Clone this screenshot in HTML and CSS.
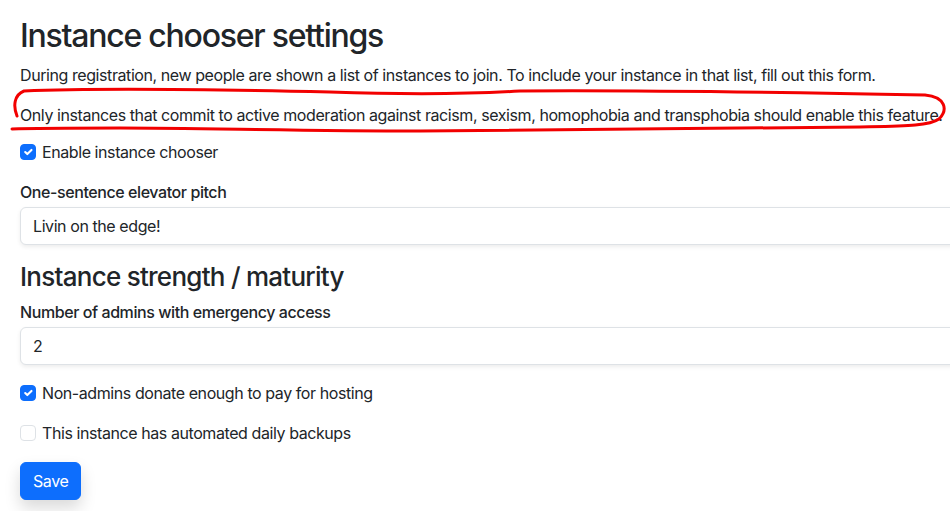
FILE: index.html
```html
<!DOCTYPE html>
<html lang="en">
<head>
    <meta charset="UTF-8">
    <meta name="viewport" content="width=device-width, initial-scale=1.0">
    <title>Instance chooser settings</title>
    <link rel="stylesheet" href="styles.css">
</head>
<body>
<main class="page">
    <h2 class="title">Instance chooser settings</h2>
    <p class="text">During registration, new people are shown a list of instances to join. To include your instance in that list, fill out this form.</p>
    <p class="text notice">Only instances that commit to active moderation against racism, sexism, homophobia and transphobia should enable this feature.</p>

    <div class="check-row">
        <input type="checkbox" id="enabled" class="check" checked>
        <label for="enabled">Enable instance chooser</label>
    </div>

    <div class="field">
        <label for="pitch" class="field-label">One-sentence elevator pitch</label>
        <input type="text" id="pitch" class="text-input" value="Livin on the edge!">
    </div>

    <h3 class="subtitle">Instance strength / maturity</h3>

    <div class="field">
        <label for="admins" class="field-label">Number of admins with emergency access</label>
        <input type="text" id="admins" class="text-input" value="2">
    </div>

    <div class="check-row">
        <input type="checkbox" id="donate" class="check" checked>
        <label for="donate">Non-admins donate enough to pay for hosting</label>
    </div>

    <div class="check-row">
        <input type="checkbox" id="backups" class="check">
        <label for="backups">This instance has automated daily backups</label>
    </div>

    <button type="submit" class="btn-save">Save</button>
</main>

<!-- hand-drawn highlight around the notice -->
<svg class="annotation" width="950" height="511" viewBox="0 0 950 511">
    <path d="M17 116 C13 106, 14 95, 24 91 C90 88, 200 89, 330 92 C420 95, 470 94, 520 91 C650 90, 820 93, 925 95 C946 97, 948 110, 939 119 C929 126, 905 126, 860 127 C700 128, 560 129, 420 131 C300 131, 200 128, 120 128 C70 128, 35 128, 12 129"
          fill="none" stroke="#f20000" stroke-width="3" stroke-linecap="round"/>
</svg>
</body>
</html>
```

FILE: styles.css
```css
body {
    margin: 0;
    font-family: Inter, "Noto Sans", sans-serif;
    font-size: 16px;
    line-height: 1.5;
    letter-spacing: -0.42px;
    color: #212529;
    background: #fff;
    overflow: hidden;
    width: 950px;
    height: 511px;
}
.page {
    width: 1100px;
    padding: 17px 0 0 20px;
}
.title {
    font-size: 32px;
    font-weight: 500;
    line-height: 1.2;
    letter-spacing: -1.24px;
    margin: 0 0 8px;
}
.subtitle {
    font-size: 26px;
    font-weight: 500;
    line-height: 1.2;
    letter-spacing: -0.74px;
    margin: 1px 0 7px;
}
.text {
    margin: 0 0 16px;
}
.notice {
    margin-bottom: 13px;
}
.check-row {
    display: flex;
    align-items: flex-start;
    gap: 6px;
    margin-bottom: 16px;
}
.check {
    appearance: none;
    width: 16px;
    height: 16px;
    margin: 4px 0 0;
    border: 1px solid #dee2e6;
    border-radius: 4px;
    background: #fff;
    flex-shrink: 0;
}
.check:checked {
    background-color: #0d6efd;
    border-color: #0d6efd;
    background-image: url("data:image/svg+xml,%3csvg xmlns='http://www.w3.org/2000/svg' viewBox='0 0 20 20'%3e%3cpath fill='none' stroke='%23fff' stroke-linecap='round' stroke-linejoin='round' stroke-width='3' d='m6 10 3 3 6-6'/%3e%3c/svg%3e");
    background-size: 100% 100%;
}
.field {
    margin-bottom: 16px;
}
.field-label {
    display: block;
    font-weight: 500;
    margin-bottom: 3px;
}
.text-input {
    display: block;
    width: 100%;
    box-sizing: border-box;
    padding: 6px 12px;
    font: inherit;
    letter-spacing: inherit;
    color: #212529;
    border: 1px solid #dee2e6;
    border-radius: 6px;
    box-shadow: 0 2px 4px rgba(0, 0, 0, 0.075);
}
.btn-save {
    font: inherit;
    letter-spacing: inherit;
    color: #fff;
    background-color: #0d6efd;
    border: 1px solid #0d6efd;
    border-radius: 6px;
    padding: 6px 12px;
    margin-top: 1px;
    box-shadow: 0 8px 16px rgba(0, 0, 0, 0.15);
    cursor: pointer;
}
.annotation {
    position: absolute;
    top: 0;
    left: 0;
    pointer-events: none;
}
```
